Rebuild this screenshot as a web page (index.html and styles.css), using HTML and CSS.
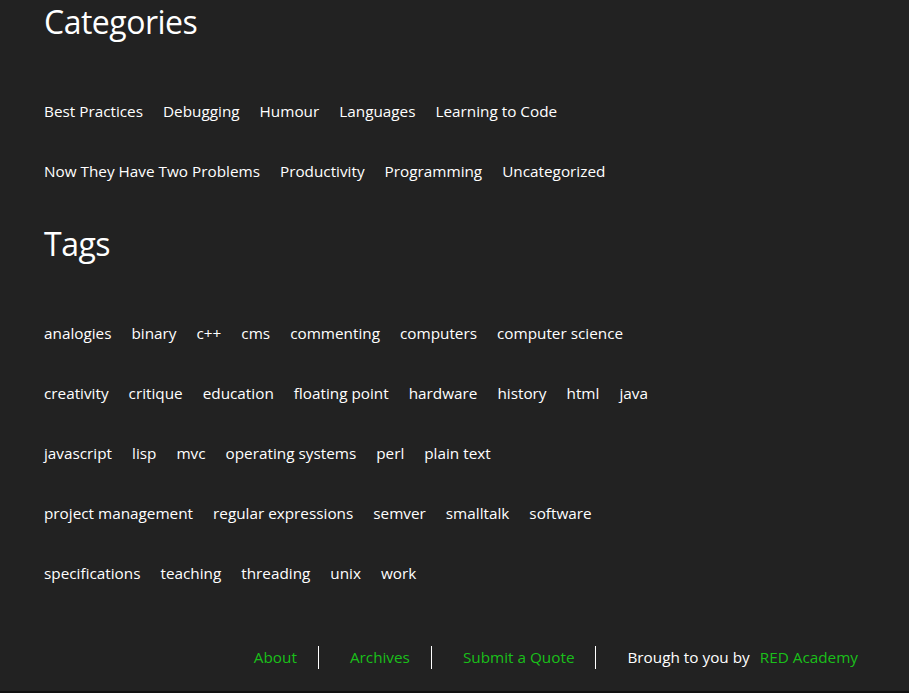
FILE: index.html
```html
<!DOCTYPE html>
<html lang="en">
<head>
<meta charset="utf-8">
<title>Categories and Tags</title>
<link rel="stylesheet" href="styles.css">
</head>
<body>
<div class="page">
  <main class="content">
    <section class="section">
      <h2 class="section-title">Categories</h2>
      <ul class="term-list">
        <li><a href="#">Best Practices</a></li>
        <li><a href="#">Debugging</a></li>
        <li><a href="#">Humour</a></li>
        <li><a href="#">Languages</a></li>
        <li><a href="#">Learning to Code</a></li>
        <li><a href="#">Now They Have Two Problems</a></li>
        <li><a href="#">Productivity</a></li>
        <li><a href="#">Programming</a></li>
        <li><a href="#">Uncategorized</a></li>
      </ul>
    </section>
    <section class="section section-tags">
      <h2 class="section-title">Tags</h2>
      <ul class="term-list tag-list">
        <li><a href="#">analogies</a></li>
        <li><a href="#">binary</a></li>
        <li><a href="#">c++</a></li>
        <li><a href="#">cms</a></li>
        <li><a href="#">commenting</a></li>
        <li><a href="#">computers</a></li>
        <li><a href="#">computer science</a></li>
        <li><a href="#">creativity</a></li>
        <li><a href="#">critique</a></li>
        <li><a href="#">education</a></li>
        <li><a href="#">floating point</a></li>
        <li><a href="#">hardware</a></li>
        <li><a href="#">history</a></li>
        <li><a href="#">html</a></li>
        <li><a href="#">java</a></li>
        <li><a href="#">javascript</a></li>
        <li><a href="#">lisp</a></li>
        <li><a href="#">mvc</a></li>
        <li><a href="#">operating systems</a></li>
        <li><a href="#">perl</a></li>
        <li><a href="#">plain text</a></li>
        <li><a href="#">project management</a></li>
        <li><a href="#">regular expressions</a></li>
        <li><a href="#">semver</a></li>
        <li><a href="#">smalltalk</a></li>
        <li><a href="#">software</a></li>
        <li><a href="#">specifications</a></li>
        <li><a href="#">teaching</a></li>
        <li><a href="#">threading</a></li>
        <li><a href="#">unix</a></li>
        <li><a href="#">work</a></li>
      </ul>
    </section>
  </main>
  <footer class="site-footer">
    <ul class="footer-nav">
      <li class="footer-item"><a class="footer-link" href="#">About</a></li>
      <li class="footer-item"><a class="footer-link" href="#">Archives</a></li>
      <li class="footer-item"><a class="footer-link" href="#">Submit a Quote</a></li>
      <li class="footer-item footer-credit">Brough to you by <a class="footer-link" href="#">RED Academy</a></li>
    </ul>
  </footer>
</div>
</body>
</html>
```
FILE: styles.css
```css
html {
  background: #111111;
}
body {
  margin: 0;
  font-family: "Open Sans", "DejaVu Sans", sans-serif;
  color: #ffffff;
}
.page {
  background: #222222;
  height: 691px;
  overflow: hidden;
}
.content {
  padding-left: 44px;
}
.section-tags {
  margin-top: 21px;
}
.section-title {
  margin: 0 0 39px;
  padding-top: 2px;
  font-size: 32px;
  line-height: 40px;
  font-weight: 400;
  letter-spacing: -0.5px;
}
.term-list {
  list-style: none;
  margin: 0;
  padding: 0;
  display: flex;
  flex-wrap: wrap;
  column-gap: 20px;
  max-width: 612px;
}
.term-list li {
  font-size: 15.3px;
  line-height: 60px;
}
.term-list a {
  color: #ffffff;
  text-decoration: none;
}
.site-footer {
  margin-top: 43px;
  padding-right: 51px;
  display: flex;
  justify-content: flex-end;
}
.footer-nav {
  list-style: none;
  margin: 0;
  padding: 0;
  display: flex;
}
.footer-item {
  font-size: 15.3px;
  line-height: 23px;
  padding: 0 21px 0 31px;
  border-right: 1px solid #ffffff;
}
.footer-item:first-child {
  padding-left: 0;
}
.footer-credit {
  border-right: none;
  padding-right: 0;
}
.footer-link {
  color: #1abf1a;
  text-decoration: none;
}
.footer-credit .footer-link {
  margin-left: 6px;
}
```
